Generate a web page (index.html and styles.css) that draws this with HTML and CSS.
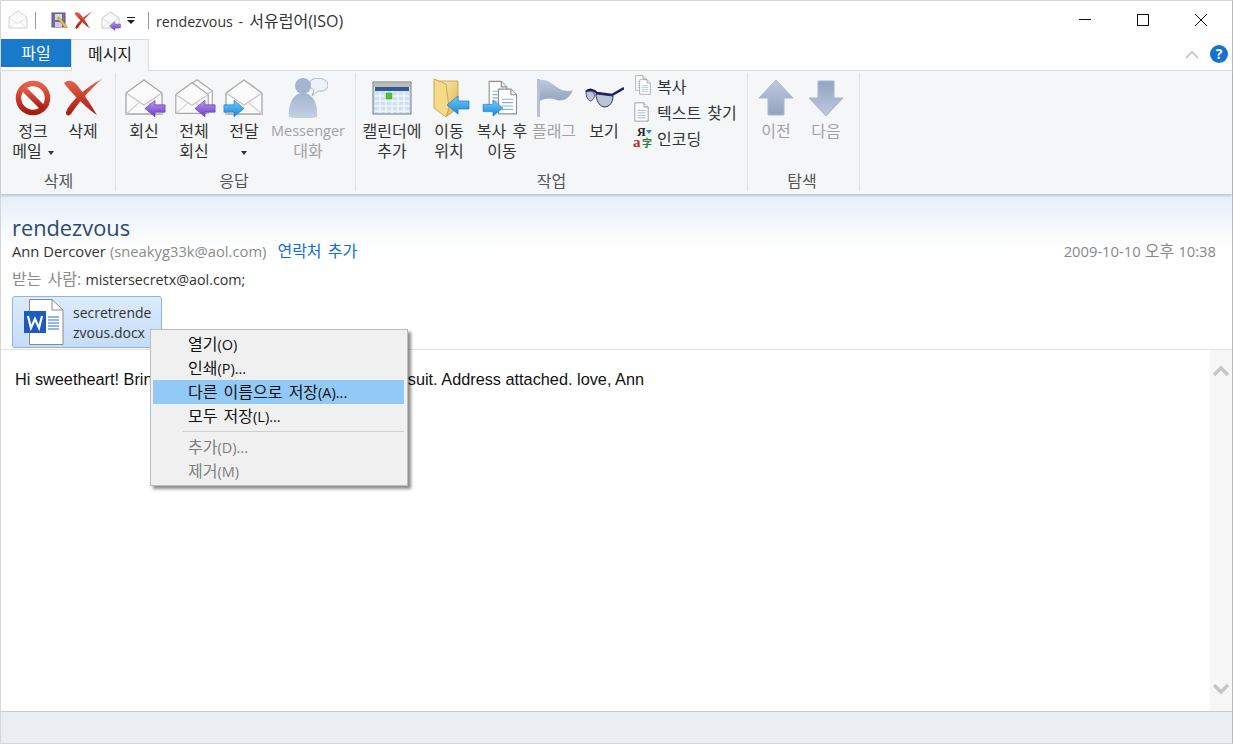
FILE: index.html
```html
<!DOCTYPE html>
<html lang="ko">

<head>
    <meta charset="UTF-8">
    <title>rendezvous - 서유럽어(ISO)</title>
    <link rel="stylesheet" href="styles.css">
</head>

<body>
    <svg class="sprite" width="0" height="0">
        <defs>
            <linearGradient id="gRed" x1="0" y1="0" x2="0" y2="1">
                <stop offset="0" stop-color="#e8604a" />
                <stop offset="1" stop-color="#a81c10" />
            </linearGradient>
            <linearGradient id="gPurple" x1="0" y1="0" x2="0" y2="1">
                <stop offset="0" stop-color="#b79af0" />
                <stop offset="1" stop-color="#6a3fc4" />
            </linearGradient>
            <linearGradient id="gBlue" x1="0" y1="0" x2="0" y2="1">
                <stop offset="0" stop-color="#6fd0fa" />
                <stop offset="1" stop-color="#1d84d8" />
            </linearGradient>
            <linearGradient id="gSteel" x1="0" y1="0" x2="0" y2="1">
                <stop offset="0" stop-color="#bdc9dc" />
                <stop offset="1" stop-color="#93a4c2" />
            </linearGradient>
            <linearGradient id="gFolder" x1="0" y1="0" x2="1" y2="1">
                <stop offset="0" stop-color="#fdf0b4" />
                <stop offset="1" stop-color="#dcb250" />
            </linearGradient>
            <linearGradient id="gPerson" x1="0" y1="0" x2="0" y2="1">
                <stop offset="0" stop-color="#a3b5cf" />
                <stop offset="1" stop-color="#c3d0e2" />
            </linearGradient>

            <symbol id="i-stop" viewBox="0 0 40 40">
                <circle cx="20" cy="20" r="14.5" fill="#fff" stroke="url(#gRed)" stroke-width="5.5" />
                <path d="M10 10 L30 30" stroke="url(#gRed)" stroke-width="6" />
            </symbol>
            <symbol id="i-x" viewBox="0 0 40 40">
                <path d="M1 5 C4 2 8 2 12 5 C18 11 26 24 34 37 C26 32 18 24 12 18 C8 14 4 9 1 5 Z" fill="url(#gRed)" />
                <path d="M39 1 C31 5 22 11 15 18 C9 24 4 30 3 35 C3 38 6 38 8 36 C13 28 26 12 39 1 Z" fill="url(#gRed)" />
            </symbol>
            <symbol id="i-env" viewBox="0 0 40 40">
                <path d="M2 15 L20 2 L38 15 V36 H2 Z" fill="#fbfbfb" stroke="#a6a6a6" stroke-width="1.3" />
                <path d="M2 15 L20 27 L38 15" fill="none" stroke="#c4c4c4" stroke-width="1.2" />
                <path d="M2 36 L16 24 M38 36 L24 24" fill="none" stroke="#d2d2d2" stroke-width="1.2" />
            </symbol>
            <symbol id="i-left-purple" viewBox="0 0 24 20">
                <path d="M1 10 L12 1 V6 H23 V14 H12 V19 Z" fill="url(#gPurple)" stroke="#5d37ad" stroke-width=".7" />
            </symbol>
            <symbol id="i-right-blue" viewBox="0 0 24 20">
                <path d="M23 10 L12 1 V6 H1 V14 H12 V19 Z" fill="url(#gBlue)" stroke="#1c78c6" stroke-width=".7" />
            </symbol>
            <symbol id="i-left-blue" viewBox="0 0 24 20">
                <path d="M1 10 L12 1 V6 H23 V14 H12 V19 Z" fill="url(#gBlue)" stroke="#1c78c6" stroke-width=".7" />
            </symbol>
            <symbol id="i-up" viewBox="0 0 40 40">
                <path d="M20 2 L37 20 H28 V37 H12 V20 H3 Z" fill="url(#gSteel)" stroke="#a9b6cc" stroke-width="1" stroke-linejoin="round" />
            </symbol>
            <symbol id="i-doc" viewBox="0 0 20 24">
                <path d="M2 1 H13 L18 6 V23 H2 Z" fill="#fff" stroke="#8f8f8f" />
                <path d="M13 1 V6 H18" fill="#eee" stroke="#8f8f8f" />
                <path d="M5 10 H15 M5 13 H15 M5 16 H15 M5 19 H15" stroke="#8fb0d6" />
            </symbol>
        </defs>
    </svg>

    <div class="window">
        <div class="titlebar">
            <svg class="qa-env" width="20" height="20">
                <use href="#i-env" />
            </svg>
            <span class="qa-sep"></span>
            <svg class="qa-save" width="17" height="17" viewBox="0 0 17 17">
                <rect x="1" y="1" width="13" height="14" fill="#7c68b0" stroke="#5d4e8c" />
                <rect x="4" y="2" width="7" height="6" fill="#d5dfc4" />
                <rect x="4" y="10" width="7" height="5" fill="#cfc9e2" />
                <path d="M6 6 L8 5 L16 14 L16 16 L14 16 Z" fill="#e9c24c" stroke="#b07a2c" stroke-width=".5" />
            </svg>
            <svg class="qa-x" width="19" height="19">
                <use href="#i-x" />
            </svg>
            <span class="qa-reply">
                <svg width="19" height="19">
                    <use href="#i-env" />
                </svg>
                <svg class="qa-arrow" width="12" height="10">
                    <use href="#i-left-purple" />
                </svg>
            </span>
            <svg class="qa-drop" width="8" height="7" viewBox="0 0 8 7">
                <path d="M0 .500 H8" stroke="#222" />
                <path d="M0 3 H8 L4 7 Z" fill="#222" />
            </svg>
            <span class="qa-sep qa-sep-2"></span>
            <span class="title-text"><span class="lat">rendezvous -</span> 서유럽어(ISO)</span>
            <div class="window-controls">
                <svg width="58" height="14" viewBox="0 0 14 14">
                    <path d="M1 6.500 H13" stroke="#111" />
                </svg>
                <svg width="58" height="14" viewBox="0 0 14 14">
                    <rect x="1.500" y="1.500" width="11" height="11" fill="none" stroke="#111" />
                </svg>
                <svg width="58" height="14" viewBox="0 0 14 14">
                    <path d="M1 1 L13 13 M13 1 L1 13" stroke="#111" />
                </svg>
            </div>
        </div>

        <div class="tabs">
            <div class="tab-file">파일</div>
            <div class="tab-message">메시지</div>
            <div class="tabs-right">
                <svg width="14" height="9" viewBox="0 0 14 9">
                    <path d="M1 8 L7 2 L13 8" fill="none" stroke="#b4b4b4" stroke-width="1.300" />
                </svg>
                <span class="help">?</span>
            </div>
        </div>

        <div class="ribbon">
            <div class="group group-delete">
                <div class="group-btns">
                    <div class="rbtn w50">
                        <svg class="ricon" width="40" height="40">
                            <use href="#i-stop" />
                        </svg>
                        <span>정크<br>메일 <i class="caret"></i></span>
                    </div>
                    <div class="rbtn w50">
                        <svg class="ricon" width="40" height="40">
                            <use href="#i-x" />
                        </svg>
                        <span>삭제</span>
                    </div>
                </div>
                <div class="group-label">삭제</div>
            </div>

            <div class="group group-reply">
                <div class="group-btns">
                    <div class="rbtn w50">
                        <div class="ricon">
                            <svg width="40" height="40">
                                <use href="#i-env" />
                            </svg>
                            <svg class="arrow-over" width="22" height="19">
                                <use href="#i-left-purple" />
                            </svg>
                        </div>
                        <span>회신</span>
                    </div>
                    <div class="rbtn w50">
                        <div class="ricon">
                            <svg class="env-back" width="34" height="34">
                                <use href="#i-env" />
                            </svg>
                            <svg class="env-front" width="36" height="36">
                                <use href="#i-env" />
                            </svg>
                            <svg class="arrow-over" width="22" height="19">
                                <use href="#i-left-purple" />
                            </svg>
                        </div>
                        <span>전체<br>회신</span>
                    </div>
                    <div class="rbtn w50">
                        <div class="ricon">
                            <svg width="40" height="40">
                                <use href="#i-env" />
                            </svg>
                            <svg class="arrow-fwd" width="22" height="19">
                                <use href="#i-right-blue" />
                            </svg>
                        </div>
                        <span>전달<br><i class="caret"></i></span>
                    </div>
                    <div class="rbtn w78 disabled">
                        <svg class="ricon" width="40" height="40" viewBox="0 0 40 40">
                            <path d="M25 1 C31 -1 40 1 40 7 C40 12 34 14 30 13 L24 18 L26 12 C21 10 20 3 25 1 Z" fill="#eef2f8" stroke="#a9b9d2" />
                            <path d="M1 39 C0 28 4 15 15 15 C26 15 30 28 29 39 C21 41 9 41 1 39 Z" fill="url(#gPerson)" />
                            <circle cx="15" cy="8" r="8" fill="#a3b5cf" />
                        </svg>
                        <span class="lat">Messenger<br></span><span>대화</span>
                    </div>
                </div>
                <div class="group-label">응답</div>
            </div>

            <div class="group group-actions">
                <div class="group-btns">
                    <div class="rbtn w60">
                        <svg class="ricon" width="40" height="40" viewBox="0 0 40 40">
                            <rect x="1" y="4" width="38" height="32" fill="#cfe0f4" stroke="#7b7b7b" />
                            <rect x="2" y="5" width="36" height="4" fill="#bcbcbc" />
                            <rect x="3" y="9" width="34" height="4" fill="#2f5c96" />
                            <path d="M3 18 H37 M3 23 H37 M3 28 H37 M3 33 H37 M8 13 V35 M14 13 V35 M20 13 V35 M26 13 V35 M32 13 V35" stroke="#fff" />
                            <rect x="14" y="15" width="6" height="6" fill="#4cc62c" stroke="#3aa020" stroke-width=".5" />
                        </svg>
                        <span>캘린더에<br>추가</span>
                    </div>
                    <div class="rbtn w54">
                        <div class="ricon">
                            <svg width="40" height="40" viewBox="0 0 40 40">
                                <path d="M8 3 L29 3 V30 L18 38 Z" fill="url(#gFolder)" stroke="#c49a3c" stroke-width=".8" />
                                <path d="M5 1 L17 6 L20 30 L17 39 L5 30 Z" fill="#f5da88" stroke="#c49a3c" stroke-width=".8" />
                            </svg>
                            <svg class="arrow-folder" width="24" height="20">
                                <use href="#i-left-blue" />
                            </svg>
                        </div>
                        <span>이동<br>위치</span>
                    </div>
                    <div class="rbtn w52">
                        <div class="ricon">
                            <svg class="doc-back" width="22" height="27">
                                <use href="#i-doc" />
                            </svg>
                            <svg class="doc-front" width="23" height="27">
                                <use href="#i-doc" />
                            </svg>
                            <svg class="arrow-doc" width="22" height="18">
                                <use href="#i-right-blue" />
                            </svg>
                        </div>
                        <span>복사 후<br>이동</span>
                    </div>
                    <div class="rbtn w52 disabled">
                        <svg class="ricon" width="40" height="40" viewBox="0 0 40 40">
                            <rect x="3" y="1" width="3" height="38" fill="#b4c1d6" />
                            <path d="M6 2 C13 1 18 6 24 10 C29 13 35 14 39 12 C36 20 29 24 23 22 C17 20 11 20 6 23 Z" fill="url(#gSteel)" />
                        </svg>
                        <span>플래그</span>
                    </div>
                    <div class="rbtn w48">
                        <svg class="ricon" width="40" height="40" viewBox="0 0 40 40">
                            <path d="M2 14 C5 10 10 12 13 15 L28 17 L40 10" fill="none" stroke="#1c1c68" stroke-width="2.400" />
                            <path d="M2 14 C6 12 10 14 11 17 C10 21 8 23 6 23 C3 21 2 18 2 14 Z" fill="#bcc4ce" stroke="#2a2a70" stroke-width=".8" />
                            <path d="M12 16 L29 18 C29 24 26 29 20 29 C15 28 12 22 12 16 Z" fill="#bcc4ce" stroke="#2a2a70" stroke-width="1" />
                        </svg>
                        <span>보기</span>
                    </div>
                    <div class="small-btns">
                        <div class="sbtn">
                            <span class="sicon">
                                <svg class="s-back" width="14" height="16">
                                    <use href="#i-doc" />
                                </svg>
                                <svg class="s-front" width="14" height="16">
                                    <use href="#i-doc" />
                                </svg>
                            </span>
                            복사
                        </div>
                        <div class="sbtn">
                            <span class="sicon">
                                <svg width="17" height="20">
                                    <use href="#i-doc" />
                                </svg>
                            </span>
                            텍스트 찾기
                        </div>
                        <div class="sbtn">
                            <span class="sicon enc">
                                <span class="enc-ru">Я</span><span class="enc-a">a</span><span class="enc-zi">字</span>
                            </span>
                            인코딩
                        </div>
                    </div>
                </div>
                <div class="group-label">작업</div>
            </div>

            <div class="group group-nav">
                <div class="group-btns">
                    <div class="rbtn w50 disabled">
                        <svg class="ricon" width="40" height="40">
                            <use href="#i-up" />
                        </svg>
                        <span>이전</span>
                    </div>
                    <div class="rbtn w50 disabled">
                        <svg class="ricon flip" width="40" height="40">
                            <use href="#i-up" />
                        </svg>
                        <span>다음</span>
                    </div>
                </div>
                <div class="group-label">탐색</div>
            </div>
        </div>

        <div class="msg-header">
            <div class="subject">rendezvous</div>
            <div class="from-row">
                <span class="from-name">Ann Dercover</span>
                <span class="from-mail">(sneakyg33k@aol.com)</span>
                <span class="add-contact">연락처 추가</span>
                <span class="msg-date"><span class="lat-m">2009-10-10</span> 오후 <span class="lat-m">10:38</span></span>
            </div>
            <div class="to-row"><span class="to-label">받는 사람:</span> <span class="to-mail">mistersecretx@aol.com;</span></div>
            <div class="attachment">
                <svg width="40" height="46" viewBox="0 0 40 46">
                    <path d="M5.500 .500 H28 L39 11 V45.500 H5.500 Z" fill="#fff" stroke="#8a8a8a" />
                    <path d="M28 .500 V11 H39" fill="none" stroke="#8a8a8a" />
                    <rect x="0" y="12" width="22" height="22" fill="#1d5bbd" />
                    <path d="M4 17 L7 29 L11 20 L15 29 L18 17" fill="none" stroke="#fff" stroke-width="2.200" />
                    <path d="M24 18 H35 M24 21 H35 M24 24 H35 M24 27 H35 M24 30 H35" stroke="#2d6ccb" stroke-width="1.200" />
                </svg>
                <span class="att-name">secretrende<br>zvous.docx</span>
            </div>
        </div>

        <div class="msg-main">
            <div class="msg-body">Hi sweetheart! Bring your fake passport and a bathing suit. Address attached. love, Ann</div>
            <div class="scrollbar">
                <svg width="18" height="12" viewBox="0 0 18 12">
                    <path d="M2 10 L9 3 L16 10" fill="none" stroke="#c6c6c6" stroke-width="3.500" />
                </svg>
                <svg width="18" height="12" viewBox="0 0 18 12">
                    <path d="M2 2 L9 9 L16 2" fill="none" stroke="#c6c6c6" stroke-width="3.500" />
                </svg>
            </div>
        </div>

        <div class="footer"></div>

        <div class="context-menu">
            <div class="menu-item">열기<span class="lat">(O)</span></div>
            <div class="menu-item">인쇄<span class="lat">(P)...</span></div>
            <div class="menu-item selected">다른 이름으로 저장<span class="lat">(A)...</span></div>
            <div class="menu-item">모두 저장<span class="lat">(L)...</span></div>
            <div class="menu-sep"></div>
            <div class="menu-item off">추가<span class="lat">(D)...</span></div>
            <div class="menu-item off">제거<span class="lat">(M)</span></div>
        </div>
    </div>
</body>

</html>
```
FILE: styles.css
```css
* {
    box-sizing: border-box;
}

html,
body {
    height: 100%;
}

body {
    margin: 0;
    padding: 0;
    background-color: #fff;
    color: #222;
    font-family: "Open Sans", "Noto Sans CJK KR", sans-serif;
    font-size: 16px;
    word-spacing: 2px;
    overflow: hidden;
}

.lat {
    font-size: 14.500px;
}

.lat-m {
    font-size: 14.750px;
    word-spacing: 0;
}

.sprite {
    display: block;
    height: 0;
}

.window {
    position: relative;
    display: flex;
    flex-direction: column;
    height: 744px;
    border: 1px solid #d6d6d6;
    border-right-color: #b8b8b8;
    background-color: #fff;
}

/* title bar */
.titlebar {
    display: flex;
    align-items: center;
    height: 38px;
    padding-left: 7px;
    flex: none;
}

.qa-env {
    opacity: .75;
}

.qa-sep {
    width: 1px;
    height: 17px;
    background-color: #999;
    margin: 0 15px 0 7px;
}

.qa-x {
    margin-left: 6px;
}

.qa-reply {
    position: relative;
    display: flex;
    margin-left: 8px;
}

.qa-arrow {
    position: absolute;
    right: -1px;
    bottom: -1px;
}

.qa-drop {
    margin-left: 7px;
}

.qa-sep-2 {
    margin: 0 7px 0 13px;
}

.title-text {
    color: #333;
}

.title-text .lat {
    font-size: 14.200px;
}

.window-controls {
    display: flex;
    margin-left: auto;
    padding-right: 2px;
}

/* tabs */
.tabs {
    display: flex;
    height: 32px;
    flex: none;
    border-bottom: 1px solid #d9dbde;
}

.tab-file {
    width: 70px;
    height: 28px;
    background-color: #1979ca;
    color: #fff;
    text-align: center;
    line-height: 28px;
}

.tab-message {
    width: 78px;
    height: 32px;
    background-color: #f5f6f7;
    border: 1px solid #d9dbde;
    border-bottom: 0;
    text-align: center;
    line-height: 28px;
}

.tabs-right {
    display: flex;
    align-items: center;
    gap: 11px;
    margin-left: auto;
    padding: 0 4px 1px 0;
}

.help {
    width: 18px;
    height: 18px;
    border-radius: 50%;
    background-color: #1473d0;
    color: #fff;
    font-size: 14px;
    font-weight: 700;
    line-height: 18px;
    text-align: center;
}

/* ribbon */
.ribbon {
    display: flex;
    height: 123px;
    flex: none;
    background-color: #f5f6f7;
    padding-top: 2px;
    padding-bottom: 3px;
    box-shadow: 0 2px 2px rgba(120, 130, 145, .35);
    position: relative;
    z-index: 1;
}

.group {
    display: flex;
    flex-direction: column;
    border-right: 1px solid #e0e2e5;
}

.group-delete {
    width: 115px;
    padding-left: 7px;
}

.group-reply {
    width: 240px;
    padding-left: 3px;
}

.group-actions {
    width: 392px;
    padding-left: 6px;
}

.group-nav {
    width: 112px;
    padding-left: 3px;
}

.group-btns {
    display: flex;
    flex: 1;
}

.group-label {
    height: 20px;
    line-height: 20px;
    margin-left: -6px;
    text-align: center;
    color: #555;
}

.rbtn {
    display: flex;
    flex-direction: column;
    align-items: center;
    padding-top: 5px;
    line-height: 20px;
    text-align: center;
    color: #333;
}

.rbtn.disabled {
    color: #a2a2a2;
}

.w48 {
    width: 48px;
}

.w50 {
    width: 50px;
}

.w52 {
    width: 52px;
}

.w54 {
    width: 54px;
}

.w60 {
    width: 60px;
}

.w78 {
    width: 78px;
}

.ricon {
    position: relative;
    display: block;
    width: 40px;
    height: 40px;
    margin-bottom: 3px;
    flex: none;
}

.flip {
    transform: scaleY(-1);
}

.caret {
    display: inline-block;
    width: 0;
    height: 0;
    border-left: 3.500px solid transparent;
    border-right: 3.500px solid transparent;
    border-top: 4px solid #333;
    vertical-align: middle;
}

.arrow-over,
.arrow-fwd,
.arrow-folder,
.arrow-doc,
.env-back,
.env-front,
.doc-back,
.doc-front {
    position: absolute;
}

.arrow-over {
    right: -2px;
    bottom: 0;
}

.arrow-fwd {
    left: -1px;
    bottom: 0;
}

.env-back {
    right: 0;
    top: 0;
}

.env-front {
    left: 0;
    top: 3px;
}

.arrow-folder {
    right: -1px;
    top: 17px;
}

.doc-back {
    left: 5px;
    top: 2px;
}

.doc-front {
    left: 14px;
    top: 10px;
}

.arrow-doc {
    left: 0;
    top: 21px;
}

.small-btns {
    display: flex;
    flex-direction: column;
    margin-left: 5px;
}

.sbtn {
    display: flex;
    align-items: center;
    gap: 5px;
    height: 26px;
    color: #333;
    white-space: nowrap;
}

.sicon {
    position: relative;
    display: block;
    width: 19px;
    height: 20px;
}

.s-back,
.s-front,
.enc-ru,
.enc-a,
.enc-zi {
    position: absolute;
    line-height: 1;
}

.s-back {
    left: 1px;
    top: -1px;
}

.s-front {
    left: 5px;
    top: 3px;
}

.enc-ru {
    left: 4px;
    top: -2px;
    font: 700 12px/1 "Liberation Serif", serif;
    color: #222;
}

.enc::after {
    content: "";
    position: absolute;
    left: 13px;
    top: 2px;
    border-left: 3px solid transparent;
    border-right: 3px solid transparent;
    border-top: 4px solid #3a7fd0;
}

.enc-a {
    left: 0;
    top: 7px;
    font: 700 15px/1 "Liberation Serif", serif;
    color: #c62a1c;
}

.enc-zi {
    left: 9px;
    top: 10px;
    font: 700 10px/1 "Noto Sans CJK KR", sans-serif;
    color: #2a7a3c;
}

/* message header */
.msg-header {
    flex: none;
    height: 155px;
    padding: 21px 11px 0 11px;
    background: linear-gradient(#e5eef9, #fff 55px);
}

.subject {
    font-size: 21.800px;
    line-height: 25px;
    color: #2b4a6e;
}

.from-row {
    display: flex;
    height: 22px;
    line-height: 22px;
    font-size: 14.750px;
    word-spacing: 0;
    color: #333;
}

.from-mail {
    margin-left: 4px;
    color: #8b8b8b;
}

.add-contact {
    margin-left: 11px;
    font-size: 16px;
    word-spacing: 2px;
    color: #0e6fd0;
}

.msg-date {
    margin-left: auto;
    padding-right: 5px;
    font-size: 16px;
    color: #888;
}

.to-row {
    height: 34px;
    padding-top: 7px;
    line-height: 20px;
    word-spacing: 0;
    color: #333;
}

.to-label {
    word-spacing: 2px;
    color: #8b8b8b;
}

.to-mail {
    font-size: 14.300px;
}

.attachment {
    display: flex;
    align-items: center;
    gap: 9px;
    width: 150px;
    height: 52px;
    padding-left: 11px;
    border: 1px solid #8db5e2;
    border-radius: 3px;
    background: linear-gradient(#dcebfd, #c5dcf9);
}

.att-name {
    padding-top: 2px;
    font-size: 14px;
    line-height: 20px;
    color: #333;
}

/* message body */
.msg-main {
    display: flex;
    flex: 1;
    border-top: 1px solid #e2e2e2;
}

.msg-body {
    flex: 1;
    padding: 20px 14px;
    font-family: "Liberation Sans", Arial, sans-serif;
    font-size: 16.300px;
    word-spacing: 0;
    line-height: 19px;
    color: #111;
}

.scrollbar {
    display: flex;
    flex-direction: column;
    justify-content: space-between;
    align-items: center;
    width: 22px;
    padding: 15px 0 16px;
    background-color: #f6f6f6;
}

.footer {
    flex: none;
    height: 32px;
    background-color: #ebeef2;
    border-top: 1px solid #c6cad0;
}

/* context menu */
.context-menu {
    position: absolute;
    left: 149px;
    top: 328px;
    width: 258px;
    height: 157px;
    padding: 2px;
    background-color: #f0f0f0;
    border: 1px solid #bcbcbc;
    box-shadow: 3px 3px 3px rgba(0, 0, 0, .45);
    z-index: 2;
}

.menu-item {
    height: 24px;
    padding-left: 35px;
    line-height: 24px;
    color: #111;
}

.menu-item.selected {
    margin-right: 1px;
    background-color: #91c9f7;
}

.menu-item.off {
    color: #7d7d7d;
}

.menu-sep {
    height: 1px;
    margin: 3px 1px 3px 30px;
    background-color: #d0d0d0;
}
```
